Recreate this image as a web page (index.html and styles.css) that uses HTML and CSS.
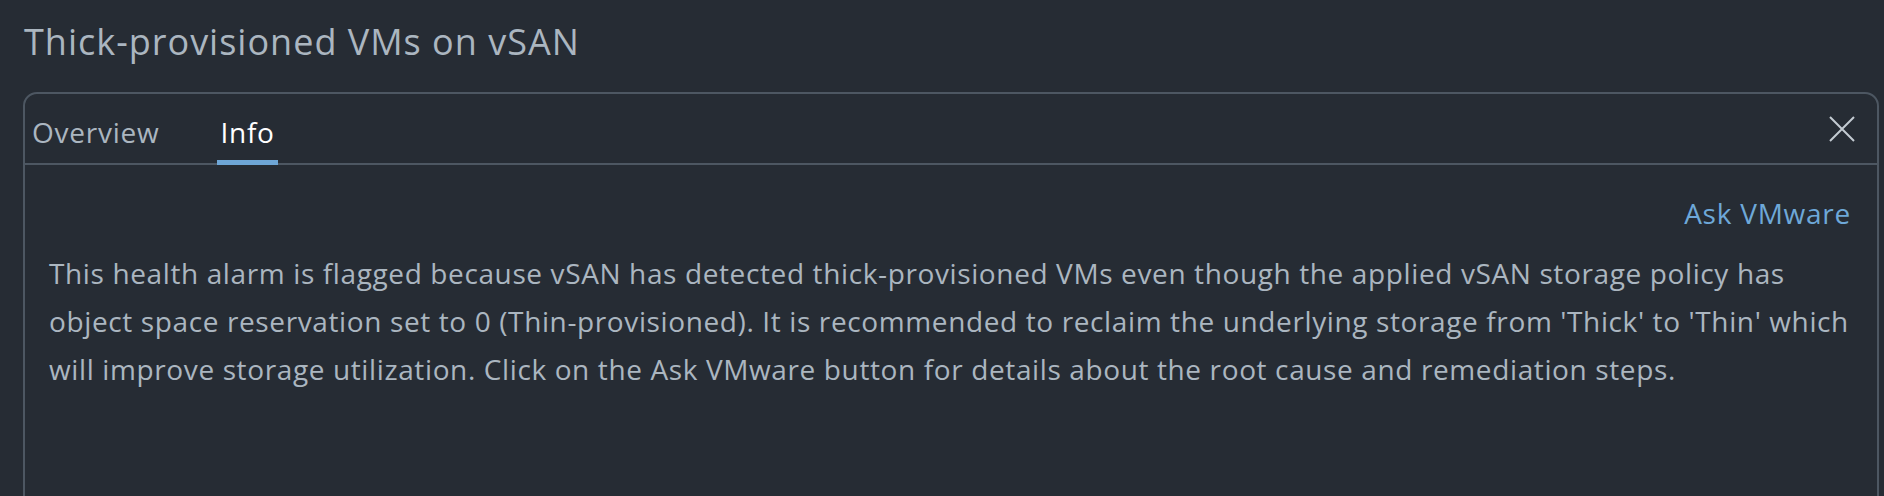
FILE: index.html
```html
<!DOCTYPE html>
<html lang="en">
<head>
<meta charset="utf-8">
<title>Thick-provisioned VMs on vSAN</title>
<link rel="stylesheet" href="styles.css">
</head>
<body>
<main class="page">
  <h1 class="page-title">Thick-provisioned VMs on vSAN</h1>
  <section class="card">
    <header class="card-header">
      <nav class="tabs">
        <a class="tab">Overview</a>
        <a class="tab tab-active">Info</a>
      </nav>
      <button class="close-btn" aria-label="Close">
        <svg viewBox="0 0 26 26" width="26" height="26"><path d="M1 1 L25 25 M25 1 L1 25" stroke="currentColor" stroke-width="2" stroke-linecap="butt" fill="none"/></svg>
      </button>
    </header>
    <div class="card-body">
      <div class="actions"><a class="ask-link">Ask VMware</a></div>
      <p class="description">This health alarm is flagged because vSAN has detected thick-provisioned VMs even though the applied vSAN storage policy has object space reservation set to 0 (Thin-provisioned). It is recommended to reclaim the underlying storage from 'Thick' to 'Thin' which will improve storage utilization. Click on the Ask VMware button for details about the root cause and remediation steps.</p>
    </div>
  </section>
</main>
</body>
</html>
```
FILE: styles.css
```css
html, body {
  margin: 0;
  padding: 0;
  background: #262c34;
  overflow: hidden;
}
body {
  font-family: "Open Sans", "Liberation Sans", sans-serif;
  color: #abb6c0;
}
.page {
  padding: 18px 5px 0 23px;
}
.page-title {
  margin: 0 0 26px 1px;
  font-size: 36px;
  line-height: 48px;
  font-weight: 400;
  letter-spacing: 1px;
  color: #abb6c0;
}
.card {
  border: 2px solid #4d5762;
  border-radius: 14px;
  min-height: 480px;
}
.card-header {
  display: flex;
  align-items: center;
  border-bottom: 2px solid #4d5762;
  height: 69px;
}
.tabs {
  display: flex;
  align-self: flex-start;
  gap: 55px;
  padding-left: 4px;
}
.tab {
  display: block;
  padding: 10px 3px 0;
  line-height: 56px;
  font-size: 28px;
  letter-spacing: 0.75px;
  color: #abb6c0;
  border-bottom: 5px solid transparent;
}
.tab-active {
  color: #ffffff;
  border-bottom-color: #6ea6d6;
}
.close-btn {
  margin-left: auto;
  margin-right: 22px;
  width: 26px;
  height: 26px;
  padding: 0;
  border: 0;
  background: none;
  color: #c3cbd2;
  display: flex;
}
.card-body {
  padding: 24px 26px 0 24px;
}
.actions {
  display: flex;
  justify-content: flex-end;
}
.ask-link {
  font-size: 28px;
  line-height: 48px;
  letter-spacing: 0.75px;
  color: #6ea8d8;
}
.description {
  margin: 12px 0 0;
  font-size: 28px;
  line-height: 48px;
  letter-spacing: 0.62px;
  color: #abb6c0;
}
```
